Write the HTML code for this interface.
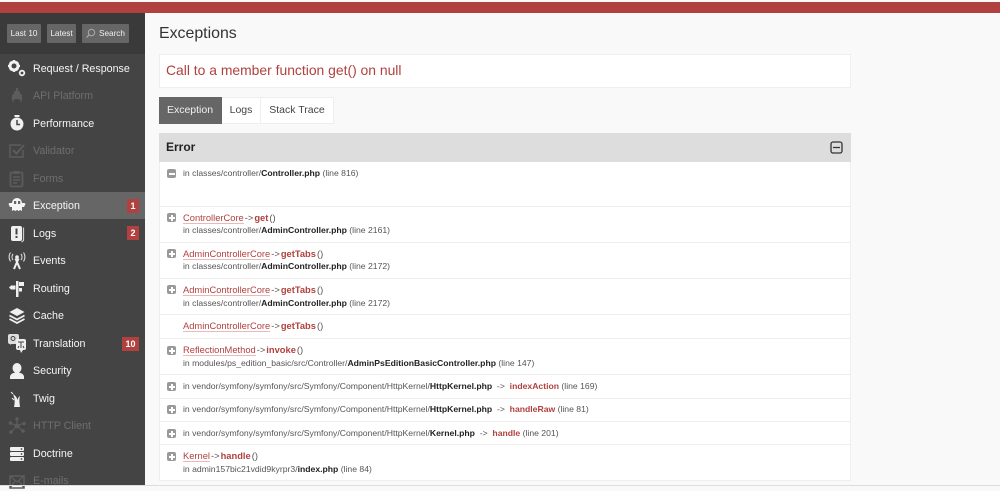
<!DOCTYPE html>
<html><head><meta charset="utf-8">
<style>
html,body{margin:0;padding:0;width:1000px;height:486px;overflow:hidden;background:#f9f9f9;font-family:"Liberation Sans",sans-serif}
div,span,svg{box-sizing:border-box}
.a{position:absolute;white-space:nowrap}
#top{left:0;top:2px;width:1000px;height:11px;background:#b0413e}
#side{left:0;top:13px;width:145px;height:473px;background:#444}
#sb{left:0;top:13px;width:145px;height:41px;background:#3a3a3a}
.btn{position:absolute;top:24px;height:19px;background:#666;color:#f0f0f0;font-size:8.2px;line-height:19px;text-align:center;border-radius:1px}
.m{position:absolute;left:33px;font-size:10.7px;line-height:14px;color:#f5f5f5;white-space:nowrap}
.d{color:#6e6e6e}
.ic{position:absolute;left:7px;width:20px;height:20px}
.bd{position:absolute;height:14px;background:#b0413e;color:#fff;font-size:9px;font-weight:bold;line-height:14px;text-align:center}
.row{position:absolute;left:159px;width:692px;background:#fff;border-left:1px solid #eee;border-right:1px solid #eee;border-bottom:1px solid #eee}
.t{position:absolute;left:183px;white-space:nowrap;font-size:8.65px;line-height:12px;color:#555}
.t b{color:#222}
.t2{position:absolute;left:183px;white-space:nowrap;font-size:9.35px;line-height:13px;color:#555}
.c{color:#b0413e;border-bottom:1px solid #eab9b8}
.t2 b,.t .r{color:#b0413e;font-weight:bold}
.t2 i{font-style:normal;margin-left:1px}
.t2 b{margin-left:1px}
.pm{position:absolute;left:167px;width:9px;height:9px;background:#999;border-radius:2px}
.pm:before{content:"";position:absolute;left:1.5px;top:3.5px;width:6px;height:2px;background:#fff}
.pm.p:after{content:"";position:absolute;left:3.5px;top:1.5px;width:2px;height:6px;background:#fff}
</style></head><body>
<div class="a" id="top"></div>
<div class="a" id="side"></div>
<div class="a" id="sb"></div>
<div class="btn" style="left:7px;width:34px">Last 10</div>
<div class="btn" style="left:47px;width:29px">Latest</div>
<div class="btn" style="left:82px;width:47px;padding-left:13px">Search</div>
<svg class="a" style="left:85px;top:28px" width="11" height="11" viewBox="0 0 11 11"><circle cx="6.5" cy="4.5" r="3.2" fill="none" stroke="#aaa" stroke-width="1"/><path d="M4 7L1.5 9.5" stroke="#aaa" stroke-width="1.2"/></svg>

<div style="position:absolute;left:0;top:192px;width:145px;height:27px;background:#666"></div>

<svg class="ic" style="top:59px" viewBox="0 0 20 20"><circle cx="7" cy="7" r="4" fill="none" stroke="#f0f0f0" stroke-width="3"/><path d="M7 1v2M7 11v2M1 7h2M11 7h2M3 3l1.5 1.5M11 3L9.500 4.500M3 11l1.500-1.500M11 11L9.500 9.500" stroke="#f0f0f0" stroke-width="2"/><circle cx="15" cy="14" r="2.300" fill="none" stroke="#f0f0f0" stroke-width="1.800"/></svg>
<div class="m" style="top:62px">Request / Response</div>
<svg class="ic" style="top:86px" viewBox="0 0 20 20"><path d="M9 2h2v3h1.500l1 3 1.500 1v5l-1.500 3v-3h-1l-.5-1H8l-.5 1h-1v3L5 14V9l1.500-1 1-3H9z" fill="#5c5c5c"/></svg>
<div class="m d" style="top:89px">API Platform</div>
<svg class="ic" style="top:114px" viewBox="0 0 20 20"><rect x="7.500" y="1" width="5" height="2" fill="#f0f0f0"/><circle cx="10" cy="10" r="6.500" fill="#f0f0f0"/><path d="M10 6v4.500h3" fill="none" stroke="#444" stroke-width="1.500"/></svg>
<div class="m" style="top:117px">Performance</div>
<svg class="ic" style="top:141px" viewBox="0 0 20 20"><path d="M16 9v7H3V4h11" fill="none" stroke="#5c5c5c" stroke-width="1.500"/><path d="M6 9l3.500 3.500L17 4" fill="none" stroke="#5c5c5c" stroke-width="2"/></svg>
<div class="m d" style="top:144px">Validator</div>
<svg class="ic" style="top:169px" viewBox="0 0 20 20"><rect x="3.500" y="3.500" width="12" height="14" rx="1.500" fill="none" stroke="#5c5c5c" stroke-width="1.800"/><rect x="7" y="2" width="5" height="3" fill="#5c5c5c"/><path d="M6 8h7M6 11h7M6 14h4" stroke="#5c5c5c" stroke-width="1.500"/></svg>
<div class="m d" style="top:172px">Forms</div>
<svg class="ic" style="top:195px" viewBox="0 0 20 20"><path d="M5 8a5 5 0 0 1 10 0h2.500l1 1-1.500 3H15v4l-1.700-1-1.600 1-1.700-1-1.700 1-1.600-1L5 16v-4H3L1.500 9l1-1z" fill="#f5f5f5"/><rect x="7" y="6" width="2.200" height="3" fill="#666"/><rect x="11" y="6" width="2.200" height="3" fill="#666"/></svg>
<div class="m" style="top:199px">Exception</div>
<div class="bd" style="left:127px;top:199px;width:12px">1</div>
<svg class="ic" style="top:224px" viewBox="0 0 20 20"><rect x="4" y="2" width="11" height="15" rx="2" fill="#f0f0f0"/><path d="M16.500 3.500v13l-2 1.500" fill="none" stroke="#ccc" stroke-width="1.200"/><rect x="8.500" y="4.500" width="2" height="6" fill="#444"/><rect x="8.500" y="12" width="2" height="2" fill="#444"/></svg>
<div class="m" style="top:227px">Logs</div>
<div class="bd" style="left:127px;top:226px;width:12px">2</div>
<svg class="ic" style="top:251px" viewBox="0 0 20 20"><circle cx="10" cy="6" r="1.800" fill="#f0f0f0"/><path d="M8.500 7.500L13 18M11.500 7.500L7 18" stroke="#f0f0f0" stroke-width="2" fill="none"/><path d="M6 9a5 5 0 0 1 0-6M14 9a5 5 0 0 0 0-6M3.500 10.500a8 8 0 0 1 0-9M16.500 10.500a8 8 0 0 0 0-9" stroke="#ddd" stroke-width="1.100" fill="none"/></svg>
<div class="m" style="top:254px">Events</div>
<svg class="ic" style="top:279px" viewBox="0 0 20 20"><rect x="9" y="2" width="2.500" height="16" fill="#f0f0f0"/><path d="M12 3h5v4h-5zM12 9h3v3.500h-3zM8.500 6.500H4L2 8.500l2 2h4.500z" fill="#f0f0f0"/></svg>
<div class="m" style="top:282px">Routing</div>
<svg class="ic" style="top:306px" viewBox="0 0 20 20"><path d="M10 2l7.500 4L10 10 2.500 6z" fill="#f0f0f0"/><path d="M2.500 9.500L10 13.500l7.500-4M2.500 13L10 17l7.500-4" fill="none" stroke="#f0f0f0" stroke-width="1.800"/></svg>
<div class="m" style="top:309px">Cache</div>
<svg class="ic" style="top:333px" viewBox="0 0 20 20"><rect x="1" y="1" width="11" height="10" rx="2" fill="#ddd"/><path d="M4 9l-1 3 3-2z" fill="#ddd"/><rect x="9" y="6" width="10" height="11" rx="2" fill="#eee"/><path d="M13 17l1 3 2-3z" fill="#eee"/><path d="M11 9h6M14 9v6M12 13l-1 2M16 13l1 2" stroke="#444" stroke-width="1" fill="none"/><circle cx="6" cy="5.500" r="2" fill="none" stroke="#444"/></svg>
<div class="m" style="top:337px">Translation</div>
<div class="bd" style="left:122px;top:337px;width:17px">10</div>
<svg class="ic" style="top:361px" viewBox="0 0 20 20"><ellipse cx="10" cy="7" rx="4.500" ry="5" fill="#f0f0f0"/><path d="M3 18v-2c0-3 3-4 5-4.500h4c2 .5 5 1.500 5 4.500v2z" fill="#f0f0f0"/></svg>
<div class="m" style="top:364px">Security</div>
<svg class="ic" style="top:389px" viewBox="0 0 20 20"><path d="M7 18c1-4 1-8-1-13 3 2 4 4 4.500 6 .5-2 1-3 2.500-4-1 3-.5 7 0 11z" fill="#f0f0f0"/><path d="M5 9l2 2M6 5L4 3" stroke="#f0f0f0" stroke-width="1" fill="none"/></svg>
<div class="m" style="top:392px">Twig</div>
<svg class="ic" style="top:416px" viewBox="0 0 20 20"><path d="M10 3v7M3 7l7 3M17 7l-7 3M4 16l6-6M16 15l-6-5" stroke="#5c5c5c" stroke-width="1.200"/><circle cx="10" cy="10" r="2.500" fill="#5c5c5c"/><circle cx="10" cy="3" r="1.800" fill="#5c5c5c"/><circle cx="3.500" cy="7" r="1.800" fill="#5c5c5c"/><circle cx="17" cy="7.500" r="1.800" fill="#5c5c5c"/><circle cx="4" cy="16" r="1.800" fill="#5c5c5c"/><circle cx="16" cy="15" r="1.800" fill="#5c5c5c"/></svg>
<div class="m d" style="top:419px">HTTP Client</div>
<svg class="ic" style="top:444px" viewBox="0 0 20 20"><rect x="3" y="3" width="14" height="4" rx="1" fill="#f0f0f0"/><rect x="3" y="8" width="14" height="4" rx="1" fill="#f0f0f0"/><rect x="3" y="13" width="14" height="4" rx="1" fill="#f0f0f0"/><circle cx="14.500" cy="5" r=".9" fill="#444"/><circle cx="14.500" cy="10" r=".9" fill="#444"/><circle cx="14.500" cy="15" r=".9" fill="#444"/></svg>
<div class="m" style="top:447px">Doctrine</div>
<svg class="ic" style="top:471px" viewBox="0 0 20 20"><rect x="3" y="5" width="14" height="12" fill="none" stroke="#5c5c5c" stroke-width="1.500"/><path d="M3 5l7 6 7-6M3 17l5-7M17 17l-5-7" fill="none" stroke="#5c5c5c" stroke-width="1.300"/></svg>
<div class="m d" style="top:474px">E-mails</div>

<div class="a" style="left:159px;top:24px;font-size:15.9px;line-height:20px;color:#333">Exceptions</div>
<div style="position:absolute;left:159px;top:54px;width:692px;height:34px;background:#fff;border:1px solid #eee"></div>
<div class="a" style="left:166px;top:62px;font-size:13.9px;line-height:17px;color:#b0413e">Call to a member function get() on null</div>

<div style="position:absolute;left:159px;top:97px;width:63px;height:27px;background:#666;color:#f0f0f0;font-size:10.500px;line-height:26px;text-align:center;padding-right:1px">Exception</div>
<div style="position:absolute;left:222px;top:97px;width:39px;height:27px;background:#fff;border:1px solid #eee;border-left:0;color:#444;font-size:10.500px;line-height:25px;text-align:center">Logs</div>
<div style="position:absolute;left:261px;top:97px;width:73px;height:27px;background:#fff;border:1px solid #eee;border-left:0;color:#444;font-size:10.500px;line-height:25px;text-align:center">Stack Trace</div>

<div style="position:absolute;left:159px;top:133px;width:692px;height:29px;background:#ddd"></div>
<div class="a" style="left:166px;top:140px;font-size:12px;line-height:15px;font-weight:bold;color:#222">Error</div>
<svg class="a" style="left:830px;top:141px" width="13" height="13" viewBox="0 0 13 13"><rect x="1" y="1" width="11" height="11" rx="2" fill="none" stroke="#333" stroke-width="1.300"/><path d="M3 6.500h7" stroke="#333" stroke-width="1.300"/></svg>

<div class="row" style="top:162px;height:45px"></div>
<div class="row" style="top:207px;height:36px"></div>
<div class="row" style="top:243px;height:36px"></div>
<div class="row" style="top:279px;height:36px"></div>
<div class="row" style="top:315px;height:24px"></div>
<div class="row" style="top:339px;height:36px"></div>
<div class="row" style="top:375px;height:24px"></div>
<div class="row" style="top:399px;height:23px"></div>
<div class="row" style="top:422px;height:23px"></div>
<div class="row" style="top:445px;height:36px"></div>

<div class="pm" style="top:169px"></div>
<div class="t" style="top:167px">in classes/controller/<b>Controller.php</b> (line 816)</div>

<div class="pm p" style="top:213px"></div>
<div class="t2" style="top:212px"><span class="c">ControllerCore</span><i>-&gt;</i><b>get</b><i>()</i></div>
<div class="t" style="top:224px">in classes/controller/<b>AdminController.php</b> (line 2161)</div>

<div class="pm p" style="top:249px"></div>
<div class="t2" style="top:248px"><span class="c">AdminControllerCore</span><i>-&gt;</i><b>getTabs</b><i>()</i></div>
<div class="t" style="top:260px">in classes/controller/<b>AdminController.php</b> (line 2172)</div>

<div class="pm p" style="top:285px"></div>
<div class="t2" style="top:284px"><span class="c">AdminControllerCore</span><i>-&gt;</i><b>getTabs</b><i>()</i></div>
<div class="t" style="top:297px">in classes/controller/<b>AdminController.php</b> (line 2172)</div>

<div class="t2" style="top:320px"><span class="c">AdminControllerCore</span><i>-&gt;</i><b>getTabs</b><i>()</i></div>

<div class="pm p" style="top:346px"></div>
<div class="t2" style="top:344px"><span class="c">ReflectionMethod</span><i>-&gt;</i><b>invoke</b><i>()</i></div>
<div class="t" style="top:357px">in modules/ps_edition_basic/src/Controller/<b>AdminPsEditionBasicController.php</b> (line 147)</div>

<div class="pm p" style="top:382px"></div>
<div class="t" style="top:380px">in vendor/symfony/symfony/src/Symfony/Component/HttpKernel/<b>HttpKernel.php</b> &nbsp;-&gt;&nbsp; <span class="r">indexAction</span> (line 169)</div>

<div class="pm p" style="top:405px"></div>
<div class="t" style="top:403px">in vendor/symfony/symfony/src/Symfony/Component/HttpKernel/<b>HttpKernel.php</b> &nbsp;-&gt;&nbsp; <span class="r">handleRaw</span> (line 81)</div>

<div class="pm p" style="top:429px"></div>
<div class="t" style="top:427px">in vendor/symfony/symfony/src/Symfony/Component/HttpKernel/<b>Kernel.php</b> &nbsp;-&gt;&nbsp; <span class="r">handle</span> (line 201)</div>

<div class="pm p" style="top:452px"></div>
<div class="t2" style="top:450px"><span class="c">Kernel</span><i>-&gt;</i><b>handle</b><i>()</i></div>
<div class="t" style="top:463px">in admin157bic21vdid9kyrpr3/<b>index.php</b> (line 84)</div>

<div style="position:absolute;left:0;top:485px;width:1000px;height:1px;background:#ddd"></div>
</body></html>
